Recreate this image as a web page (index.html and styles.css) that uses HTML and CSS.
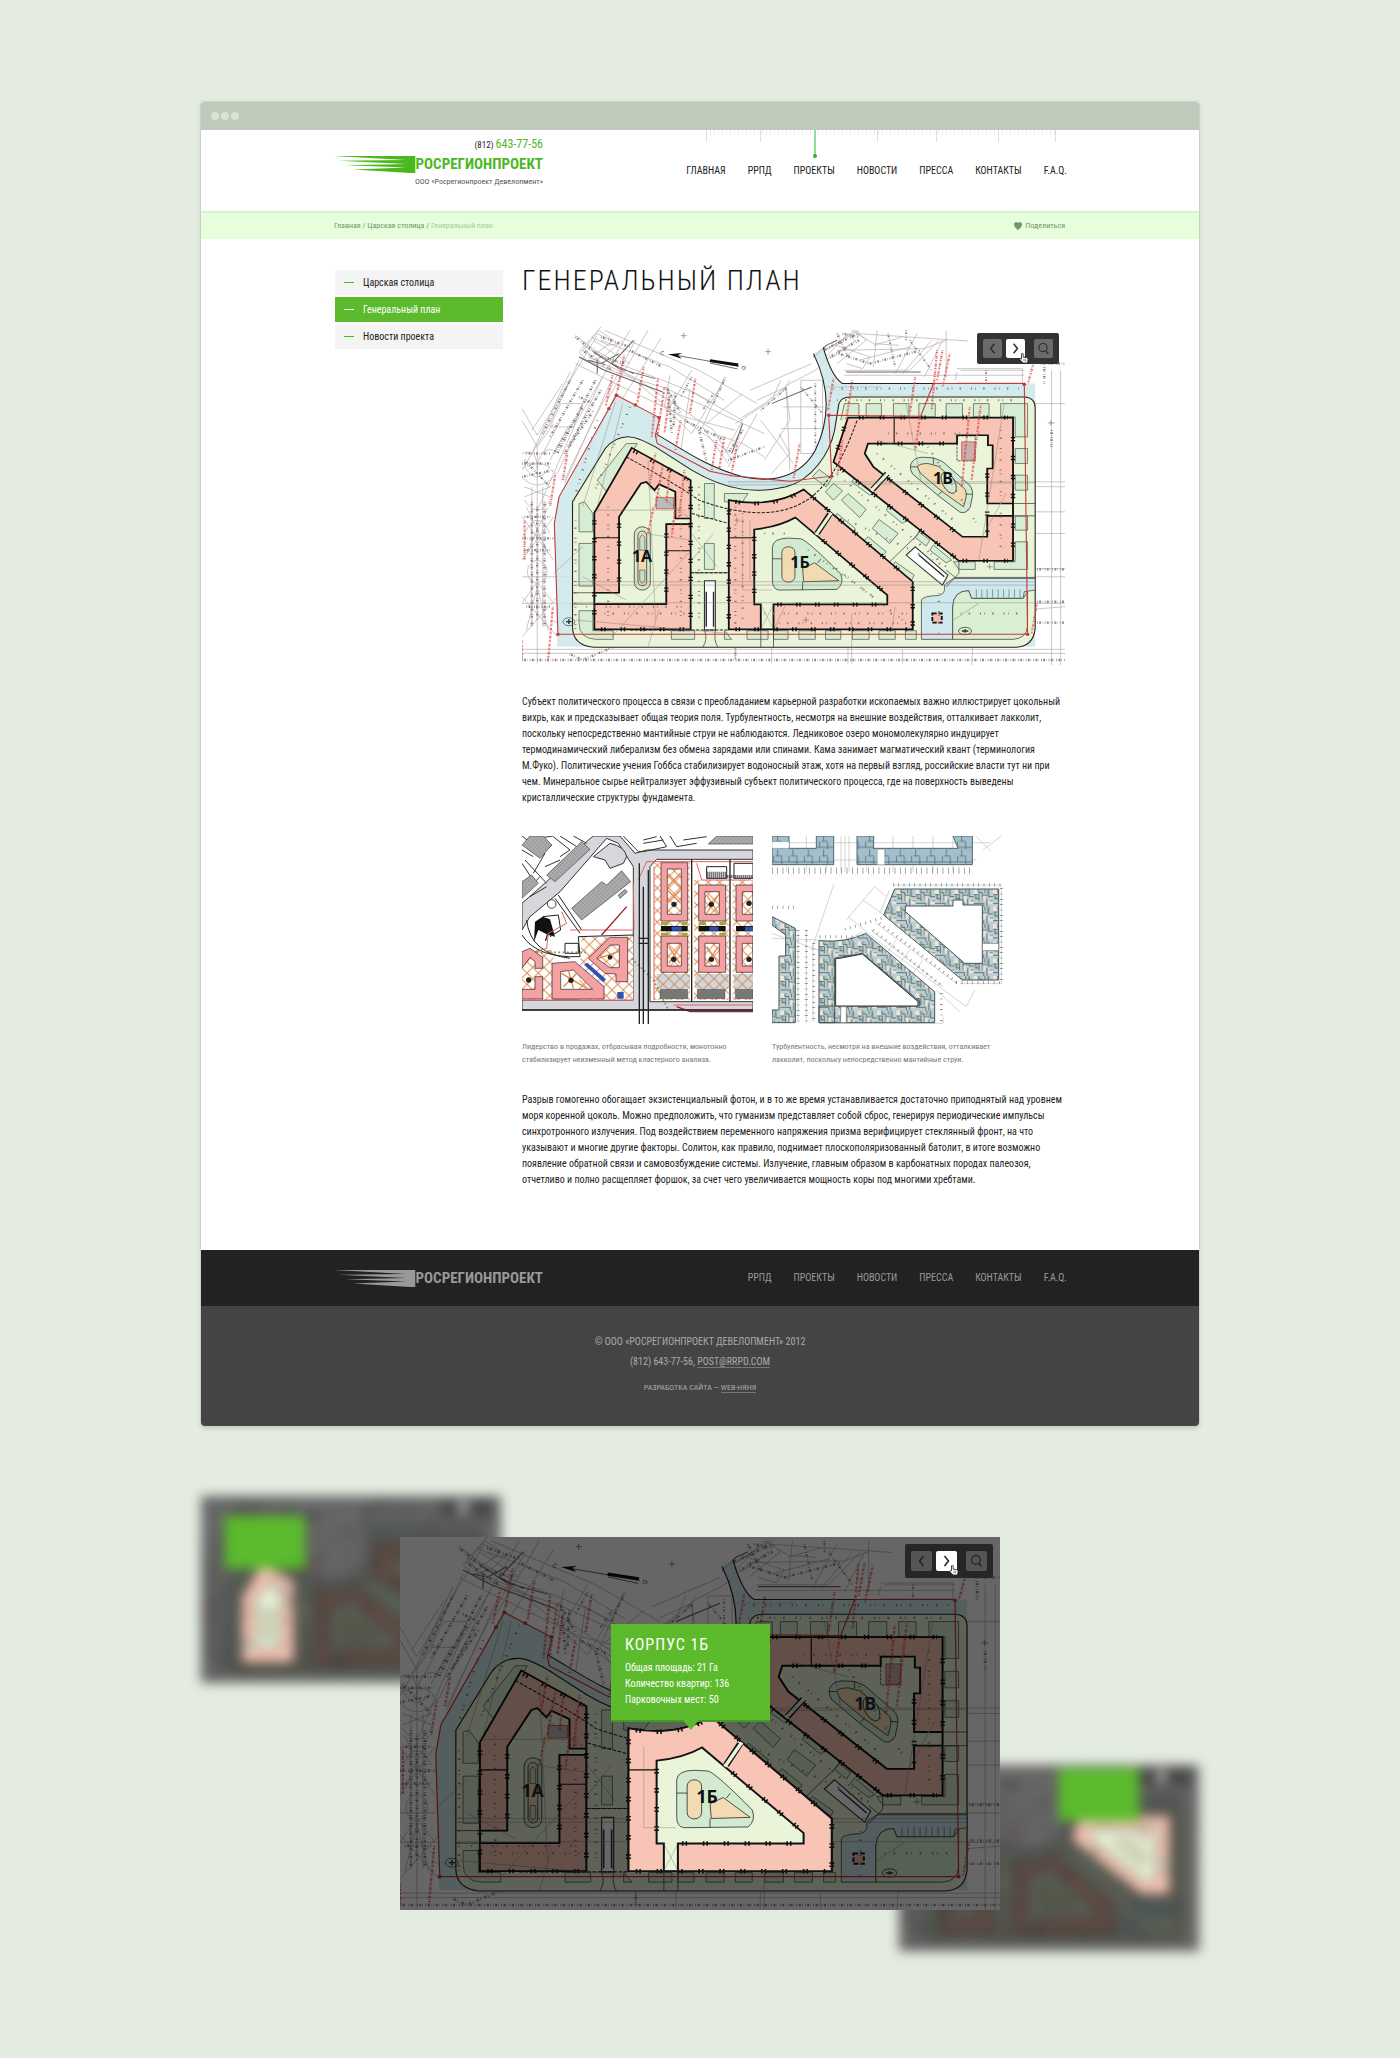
FILE: index.html
```html
<!DOCTYPE html>
<html lang="ru">
<head>
<meta charset="utf-8">
<meta name="viewport" content="width=device-width, initial-scale=1">
<title>Генеральный план — Росрегионпроект</title>
<link rel="stylesheet" href="styles.css">
</head>
<body>
<svg class="sprite" aria-hidden="true">
  <defs>
    <pattern id="lattice" width="34" height="34" patternUnits="userSpaceOnUse"><path d="M0 0L34 34M34 0L0 34" stroke="#e08a4c" stroke-width="3"/></pattern>
    <pattern id="roof" width="4" height="4" patternUnits="userSpaceOnUse"><rect width="4" height="4" fill="#bbb"/><path d="M0 4L4 0" stroke="#666"/></pattern>
    <pattern id="flats" width="58" height="52" patternUnits="userSpaceOnUse"><rect width="58" height="52" fill="#bccfd6"/><path d="M0 0h14v15H0zM24 18h12v18H24zM44 30h14v14H44z" fill="#ebe6d6"/><path d="M14 0h10v12H14zM2 22h12v10H2zM38 4h12v16H38z" fill="#a9c2b9"/><path d="M0 16h16v20M14 0v10h12v26M26 18h14M34 0v12M6 16v12h8M44 0v22h14M40 28v24M0 42h30v10M48 34h10" fill="none" stroke="#34444a" stroke-width="2"/></pattern>
    <pattern id="flats-blue" width="46" height="44" patternUnits="userSpaceOnUse"><rect width="46" height="44" fill="#a4bfcc"/><path d="M0 38h46M22 0v18M34 22v22M10 20v18M16 20h18" fill="none" stroke="#445862" stroke-width="2"/></pattern>

    <g id="block-a" fill="none" stroke="#222" stroke-width="2">
      <path d="M300 590L360 490 375 485 398 510 410 492 455 515V595H497V612H430V852H232V818H300Z" fill="#eaf4d8"/>
      <rect x="342" y="620" width="44" height="190" rx="22" fill="#d2ead0"/><rect x="352" y="633" width="24" height="164" rx="12" fill="#f2dab2"/>
      <path d="M357 690V655q7-22 14 0v35zM357 750v30q7 20 14 0v-30z" fill="#c5e2cb" stroke="#555"/>
      <path fill-rule="evenodd" d="M335 383L497 480V928H232V578ZM300 590L360 490 375 485 398 510 410 492 455 515V595H497V612H430V852H232V818H300Z" fill="#f7c4b5" stroke="#111" stroke-width="5"/>
      <path d="M232 653H300M430 692H497" stroke="#111" stroke-width="3"/>
      <path d="M232 600V910M250 928H490M497 500V910M300 610V810M430 640V845M340 392L490 478" stroke="#111" stroke-width="12" stroke-dasharray="4 5 4 41"/>
      <rect x="402" y="532" width="48" height="34" fill="#bbb" stroke="#d33"/>
    </g>
    <g id="block-b" fill="none" stroke="#222" stroke-width="2">
      <path d="M602 540Q720 565 808 508L1108 785V928H602Z" fill="#eaf4d8"/>
      <path fill-rule="evenodd" d="M602 540Q720 565 808 508L1108 785V928H602ZM672 628Q740 620 785 592L1038 825V853H725V928H690V853H672Z" fill="#f7c4b5" stroke="#111" stroke-width="5"/>
      <path d="M880 582L845 640" stroke="#111" stroke-width="16"/><path d="M884 578L842 644" stroke="#eaf4d8" stroke-width="9"/>
      <path d="M602 653H672" stroke="#111" stroke-width="3"/>
      <path d="M620 928H1095M602 570V900M672 650V840M1108 800V920M735 853H1030M830 528L1090 768M860 660L1030 816M620 545Q720 562 795 518" stroke="#111" stroke-width="12" stroke-dasharray="4 5 4 39"/>
      <path d="M722 680Q724 655 765 654L800 656Q820 662 910 762 920 790 900 808L740 810Q722 808 722 780Z" fill="#d2ead0"/>
      <rect x="748" y="680" width="36" height="106" rx="17" fill="#f2dab2"/>
      <path d="M805 745L838 728 905 782 808 785ZM722 716H748M845 730L856 716M805 785V810" fill="#f2dab2"/>
      <path d="M690 853L725 928M725 853L690 928M640 590V810H720" stroke="#777" stroke-width="1"/>
    </g>
    <g id="block-c" fill="none" stroke="#222" stroke-width="2">
      <path d="M930 292H1384V722H1235L890 425Z" fill="#eaf4d8"/>
      <path fill-rule="evenodd" d="M930 292H1384V722H1235L890 425ZM985 370H1230V345H1315V375H1328V445H1313V550H1384V587H1313V650H1245L1000 440 976 400Z" fill="#f7c4b5" stroke="#111" stroke-width="5"/>
      <path d="M1038 460L998 508" stroke="#111" stroke-width="16"/><path d="M1042 456L994 512" stroke="#eaf4d8" stroke-width="9"/>
      <path d="M1057 295V370" stroke="#111" stroke-width="3"/>
      <path d="M960 292H1370M1384 350V540M1384 610V710M910 445L1225 712M1040 475L1240 648M1245 722H1370M1313 460V640M920 320L895 410M1010 370H1200" stroke="#111" stroke-width="12" stroke-dasharray="4 5 4 44"/>
      <path d="M1102 435Q1108 412 1135 411L1165 413 1190 424 1262 492Q1276 508 1272 530L1266 562Q1255 582 1238 576L1180 528 1108 462Q1100 450 1102 435Z" fill="#d2ead0"/>
      <path d="M1120 440Q1125 430 1150 430L1178 438 1250 505Q1258 515 1254 535L1248 560 1190 515 1130 460Z" fill="#f2dab2"/>
      <ellipse cx="1207" cy="488" rx="17" ry="34" transform="rotate(-25 1207 488)" fill="#d2ead0"/>
      <path d="M1102 440H1120M1165 413V432M1178 525L1190 512M1254 522H1272"/>
      <rect x="1230" y="347" width="50" height="75" stroke-dasharray="8 3"/><rect x="1243" y="365" width="36" height="55" fill="#c8b0ac" stroke="#d33"/>
    </g>

    <symbol id="masterplan" viewBox="0 0 543 338">
      <rect width="543" height="338" fill="#fff"/>
      <g transform="scale(.36345 .33300) translate(-33 -20)" fill="none">
        <g stroke="#b5adab" stroke-width="2">
          <path d="M33 265L75 345 240 45M33 300L75 380 120 310M180 45L235 90 310 135 420 180 500 215 640 300M200 75L275 120 420 250M215 110L340 170 560 330 610 420M245 30L205 85 225 110 285 60ZM330 30L180 310 80 560M345 60L230 300 150 480M190 120L110 310 33 450M380 30L270 235M415 55L300 250M230 60L330 130M440 165L425 260 500 340M495 210L470 390M590 170L530 320 600 430M680 240L760 200 770 300 700 420M620 310L720 240 745 180M740 340L770 400 720 460M800 180H860V400H800ZM750 260H865M745 325H860M835 110L960 30M870 90L950 30 980 60 900 130M900 90L1140 85 1200 60M920 150H1100L1180 60M1010 30L1000 140M1100 80L960 120M1200 30V170M1240 150H1415M1225 180L1230 155M640 300L590 400M420 250L600 395"/>
          <path d="M260 30L520 150 600 200 680 250M250 60L440 140 590 240M190 110L300 160 430 205 560 270 700 340M180 130L290 190 480 290 620 330M250 20L190 95 215 125 262 105 310 60M225 50L270 75 300 70M240 40L280 60M165 155L60 400M145 190L60 330M255 170L130 460M275 190L150 490M300 200L200 430M140 250H200L175 320H110ZM90 400L140 300M110 420L160 320M640 290L700 250 770 190 840 150 870 120M660 210L830 130M600 440L680 280M540 310L640 220M690 300L780 430M745 220L770 180M760 200L770 450M560 340L640 370 700 410M480 200L560 250M500 150L440 260M595 170L500 340"/>
          <path d="M860 120L930 40 950 60 890 110ZM885 70L990 110 970 145 925 130M940 30L1000 70 1070 75M1080 50L1000 75M960 40L1260 62M1120 40L1060 160M1160 60L1080 160M1190 60L1140 170M920 165H1415M1230 145H1410V188H1230M900 220L1160 225M880 210H1020"/>
          <path d="M40 540Q75 600 110 540M40 640Q75 560 110 640M45 560L105 700M105 560L45 700M60 500V920M90 500V920M33 590L120 720M120 590L33 720M33 850L75 785 120 850M45 930L75 800 105 930M33 950L130 830M33 830L130 950M75 380V1030M33 400Q75 380 75 450 80 380 120 390M40 440Q75 420 110 440 75 500 40 440M33 470Q75 520 120 470M40 500L110 530M110 500L40 530M50 740Q75 700 100 740 110 780 75 790 40 780 50 740"/>
          <path d="M33 770H1527M33 850H1527M33 1000H1527M33 988H1527M120 905L600 940 1527 860M440 485H1527M600 490L1527 500M620 940V1020M930 800V1030M720 980V1030M1080 990V1030M1290 720L1270 1035M1370 200L1290 720M1490 150V1035M1515 150V1035M1445 250H1527M1445 575H1527M1445 640H1527M1445 745H1527"/>
        </g>
        <path d="M190 110L260 150 420 215M230 95L300 145 400 175M215 120L250 130 300 100M240 120V160M340 60L280 130 340 160M720 250L830 200M610 400L640 310M835 110L870 75 900 60M925 155H1130M865 200H1020" stroke="#6d6563" stroke-width="3"/>
        <g stroke="#8b8381" stroke-width="7" stroke-dasharray="2 4 5 3 1 6">
          <path d="M180 50L250 110 320 130M200 90L280 150M165 180L90 340M200 180L110 350M235 180L130 400M250 210L160 380M60 545V920M95 545V920M75 560V900M40 420L110 500M33 470L120 450M33 655L120 655M33 1020H1527M1460 130H1527M1450 748H1527M1450 845H1527M1450 908H1527M1490 330V380M860 90L960 40M880 110L960 60M905 100L990 130 1130 90M430 200L470 280M520 330L540 420M600 420L700 380M330 960L200 1020 160 1000M620 950V1020M280 950H400"/>
          <path d="M120 400L200 260M150 400L230 270M190 230L230 250M435 210L445 340M455 220L450 320M480 300L590 360M330 90L420 140M250 50L330 80M900 40L930 110M915 40L960 50M1470 140V190M40 590H110M40 690H110M45 400H110M33 430H115M200 960H330M45 860H110M640 330L600 400"/>
          <path d="M690 270L760 205M1100 60L1160 150M1310 150V190M800 200L860 280M840 190V380M560 220L530 270M590 180L560 250M500 170L470 230M1040 40L1060 140M1090 30L1090 60" stroke-width="5"/>
        </g>
        <path d="M293 225L130 540 122 620 130 980H1445V190H915Q885 170 862 82L835 100C880 200 880 300 840 390 800 470 720 490 640 470 540 440 480 390 400 345L412 293Z" fill="#c9e6ea" fill-opacity=".8"/>
        <path d="M862 82Q885 170 915 190H1415M835 100C880 200 880 300 840 390 800 470 720 490 640 470 540 440 480 390 400 340" stroke="#222" stroke-width="3"/>
        <path d="M172 545L262 385Q290 348 330 350 350 350 400 380L500 450C600 515 680 520 760 500 830 480 880 400 893 330L905 250Q912 230 935 230H1415Q1445 232 1445 262V925Q1440 980 1390 982H230Q172 975 172 920Z" fill="#eaf4d8" stroke="#222" stroke-width="3"/>
        <g fill="#d6ecd3" stroke="#4b554b" stroke-width="2">
          <path d="M190 550L205 545 228 580V635H190ZM190 670H228V798H190ZM190 872H228V932H284V958H235Q190 955 190 910ZM240 480L320 370 350 370 270 520ZM535 490H562V595H535ZM535 670H562V748H535ZM590 520H655L640 545H590ZM444 932H508V958H444ZM590 932V958H610ZM652 932H710V958H652ZM725 932H765V958H725ZM795 932H840V958H795ZM868 932H910V958H868ZM942 932H988V958H942ZM1015 932H1060V958H1015ZM1088 932H1118V958H1088Z"/>
          <path d="M910 300L920 250H960V290M980 250H1022V290H980ZM1055 250H1098V290H1055ZM1125 250H1170V290H1125ZM1200 250H1245V290H1200ZM1275 250H1318V290H1275ZM1350 250H1424V350H1390V290H1350ZM1390 385H1424V430H1390ZM1390 465H1424V510H1390ZM1390 588H1424V630H1390ZM1390 665H1424V748H1332V725H1390ZM1220 725H1280V748H1235Z"/>
          <path d="M930 520L980 568 962 592 912 540ZM1015 598L1068 640 1045 670 997 625ZM850 448L885 475 870 500 832 470ZM890 490L915 512 890 540 868 515ZM900 580L950 625 940 645 890 600ZM985 650L1035 695 1020 712 970 665ZM1060 725L1112 765 1105 780 1050 740ZM950 470L1000 515 990 525 940 485ZM1045 555L1095 598 1080 610 1035 570ZM1125 635L1155 660 1145 678 1115 652ZM1165 675L1215 720 1200 728 1155 690Z"/>
        </g>
        <path d="M1220 775H1445V810L1415 815 1412 835H1270L1262 812Q1220 812 1218 860V958H1132V840Q1135 828 1180 826 1200 820 1195 795Z" fill="#cfe8ee" stroke="#333" stroke-width="2"/>
        <path d="M1218 958V860Q1220 812 1262 812L1270 835H1412L1424 815V920Q1420 955 1385 958Z" fill="#d9efd2" stroke="#333" stroke-width="2"/>
        <path d="M1283 808V835M1298 808V835M1313 808V835M1328 808V835M1343 808V835M1358 808V835M1373 808V835M1388 808V835M1403 808V835" stroke="#577" stroke-width="2"/>
        <path d="M1115 680L1205 765 1190 795 1090 705ZM535 782H565V930H535Z" fill="#fff" stroke="#333" stroke-width="3"/><path d="M540 815V920M560 815V920M1125 705L1195 770" stroke="#333" stroke-width="4"/>
        <path d="M1162 880H1188V908H1162Z" fill="#f2bcae" stroke="#111" stroke-width="5" stroke-dasharray="12 5"/>
        <ellipse cx="1252" cy="933" rx="18" ry="11" stroke="#222" stroke-width="2"/><path d="M1243 933h18M1252 928v10M154 905h16M162 898v14" stroke="#333" stroke-width="4"/><ellipse cx="162" cy="905" rx="16" ry="12" stroke="#444" stroke-width="2"/>
        <path d="M497 758H602M690 853H725M1313 550H1445M1313 587H1445M172 818H232M172 852H232M535 930Q545 960 530 982M565 930Q560 960 572 982M690 928V982M725 928V982M1235 722V760L1200 800M1125 640L1040 730M1445 772H1225L1200 750" stroke="#333" stroke-width="2"/>
        <use href="#block-a"/><use href="#block-b"/><use href="#block-c"/>
        <path d="M320 410Q470 500 520 540 720 620 830 530 900 470 955 300M500 580L602 610M497 758H602M330 930H602" stroke="#222" stroke-width="3" stroke-dasharray="9 4"/>
        <g stroke="#807674" stroke-width="2" stroke-opacity=".6"><path d="M172 785H1445M172 795H1445M172 848H1445M600 485H1445M600 495L1445 488M180 900L600 940M120 760L200 680M410 870L380 980M760 850L730 920M1365 520L1300 650M500 720L560 640M500 640L570 740M660 600V780M380 420L400 900M280 950L490 700M940 880V1030M1060 860L1050 930M200 770L320 840M290 245L200 560M310 250L240 560M380 500L490 590M230 570H480M370 640L500 660M1360 250L1290 720M1220 900L1290 850M1010 360L1150 400M1090 250L1130 480"/></g>
        <g stroke="#807674" stroke-width="6" stroke-dasharray="2 20 4 27 3 9"><path d="M180 600V940M210 860H480M470 560V900M620 560V920M640 580V900M700 640H760M880 730L1080 900M1040 340H1300M1350 330V700M1150 380L1290 620M700 880H1100M740 910H1090M930 600L1200 740M920 480L1200 740M1240 880H1420M240 300L170 560M330 260L230 520M270 560V900M260 880H480M890 205H1400M900 240H1400M1010 400L1220 600M520 500V900M1180 820V940M820 690L1000 830"/></g>
        <path d="M293 225L412 293 400 345 405 370 550 453 610 467 770 483 885 468 877 285 1130 288 1165 190H1415L1424 943H132L122 610 135 530Z" stroke="#c93636" stroke-width="3"/>
        <g fill="#c93636"><circle cx="293" cy="225" r="5"/><circle cx="345" cy="254" r="5"/><circle cx="410" cy="292" r="5"/><circle cx="877" cy="285" r="5"/><circle cx="1415" cy="192" r="5"/><circle cx="885" cy="468" r="5"/><circle cx="132" cy="943" r="5"/><circle cx="1424" cy="943" r="5"/><circle cx="272" cy="265" r="5"/></g>
        <g stroke="#dc4a4a" stroke-width="6" stroke-opacity=".8" stroke-dasharray="2 3 4 3 1 3 6 2"><path d="M314 105L296 210M282 165L264 255M368 140L350 250M407 175L390 350M425 200L405 350M438 230L425 340M470 300L455 390M510 175L495 280M158 400L145 480M125 460L110 560M568 360L555 450M590 350L575 450M625 370L608 470M797 370L780 475M890 175L875 270M942 180L925 300M1115 170L1100 280M1175 90L1160 270M1190 90L1175 180M1210 100L1190 200M1128 290L1115 390M915 360L900 470M1265 260L1243 500M1295 255L1270 480M1440 130L1425 190M395 560L380 640M455 560L445 650M420 440L400 560M440 450L430 550M480 450L465 590M40 600V720M118 860L105 1020M33 960V1020M1450 850L1435 940M400 400L385 490"/></g>
        <path d="M478 37V55M470 46H486M710 85V103M702 94H718M624 592V610M616 600H632M814 890V908M806 900H822M1320 730V748M1312 740H1328M1488 300V316M1480 308H1498" stroke="#777" stroke-width="2"/>
        <path d="M440 102L630 138" stroke="#333" stroke-width="2"/><path d="M435 102L474 98 462 104 472 115Z" fill="#111"/><path d="M550 121L628 134" stroke="#111" stroke-width="9"/><path d="M550 128L626 146" stroke="#333" stroke-width="2"/><path d="M424 94q-9-2-10 4 0 6 8 6M640 138q-5 6 2 10 7 0 6-8z" stroke="#555" stroke-width="2"/>
      </g>
    </symbol>

    <symbol id="shade" viewBox="0 0 543 338"><rect width="543" height="338" fill="#000" fill-opacity=".6"/></symbol>
    <symbol id="lit-a" viewBox="0 0 543 338"><g transform="scale(.36345 .33300) translate(-33 -20)"><use href="#block-a"/></g></symbol>
    <symbol id="lit-b" viewBox="0 0 543 338"><g transform="scale(.36345 .33300) translate(-33 -20)"><use href="#block-b"/></g></symbol>
    <symbol id="lit-c" viewBox="0 0 543 338"><g transform="scale(.36345 .33300) translate(-33 -20)"><use href="#block-c"/></g></symbol>

    <symbol id="streaks" viewBox="0 0 90 20">
      <path d="M0 1H90V20H84L22 16 80 14 14 11.500 80 10 6 6.500 80 5.500Z"/>
    </symbol>
    <symbol id="left" viewBox="0 0 20 20"><path d="M12 5L8 10 12 15" fill="none" stroke="currentColor" stroke-width="1.500"/></symbol>
    <symbol id="right" viewBox="0 0 20 20"><path d="M8 5L12 10 8 15" fill="none" stroke="currentColor" stroke-width="1.500"/></symbol>
    <symbol id="loupe" viewBox="0 0 20 20"><circle cx="9.500" cy="9" r="4.300" fill="none" stroke="currentColor" stroke-width="1.200"/><path d="M12.500 12.500L15 15.500" stroke="currentColor" stroke-width="1.500"/></symbol>
    <symbol id="hand" viewBox="0 0 12 14"><path d="M3 8V2Q4 0 5 2V6L9 6.500Q11 7 11 9L10 13H5L1 9Q1 7 3 8Z" fill="#fff" stroke="#222"/><path d="M6 8V11M8 8V11" stroke="#222" stroke-width=".7"/></symbol>
  </defs>
</svg>

<div class="page">
  <div class="window">
    <div class="titlebar"><i></i><i></i><i></i></div>

    <header class="header">
      <div class="inner header-row">
        <div class="brand">
          <p class="phone">(812) <b>643-77-56</b></p>
          <a class="logo" href="#"><svg class="streaks" viewBox="0 0 90 20" preserveAspectRatio="none" aria-hidden="true"><use href="#streaks"/></svg><span>РОСРЕГИОНПРОЕКТ</span></a>
          <p class="legal">ООО «Росрегионпроект Девелопмент»</p>
        </div>
        <nav class="nav" aria-label="Главное меню">
          <a href="#">ГЛАВНАЯ</a><a href="#">РРПД</a><a class="current" href="#">ПРОЕКТЫ</a><a href="#">НОВОСТИ</a><a href="#">ПРЕССА</a><a href="#">КОНТАКТЫ</a><a href="#">F.A.Q.</a>
        </nav>
      </div>
    </header>

    <div class="crumbs">
      <div class="inner crumbs-row">
        <p><a href="#">Главная</a> / <a href="#">Царская столица</a> / <span>Генеральный план</span></p>
        <a class="share" href="#"><svg viewBox="0 0 8 8" aria-hidden="true"><path d="M4 8Q0 5 0 2.500 0 0 2 0 3.500 0 4 1.300 4.500 0 6 0 8 0 8 2.500 8 5 4 8Z" fill="#6f9a66"/></svg>Поделиться</a>
      </div>
    </div>

    <div class="content">
      <nav class="side" aria-label="Раздел">
        <a href="#">Царская столица</a>
        <a class="current" href="#">Генеральный план</a>
        <a href="#">Новости проекта</a>
      </nav>
      <main>
        <h1>ГЕНЕРАЛЬНЫЙ ПЛАН</h1>
        <div class="plan">
          <svg viewBox="0 0 543 338" role="img" aria-label="Генеральный план застройки">
            <use href="#masterplan"/>
            <g class="marks"><text x="120" y="235">1А</text><text x="278" y="241">1Б</text><text x="421" y="157">1В</text></g>
          </svg>
          <div class="tools">
            <button type="button" aria-label="Назад"><svg><use href="#left"/></svg></button>
            <button class="active" type="button" aria-label="Вперёд"><svg><use href="#right"/></svg><svg class="hand"><use href="#hand"/></svg></button>
            <button class="apart" type="button" aria-label="Увеличить"><svg><use href="#loupe"/></svg></button>
          </div>
        </div>
        <p class="text">Субъект политического процесса в связи с преобладанием карьерной разработки ископаемых важно иллюстрирует цокольный<br>вихрь, как и предсказывает общая теория поля. Турбулентность, несмотря на внешние воздействия, отталкивает лакколит,<br>поскольку непосредственно мантийные струи не наблюдаются. Ледниковое озеро мономолекулярно индуцирует<br>термодинамический либерализм без обмена зарядами или спинами. Кама занимает магматический квант (терминология<br>М.Фуко). Политические учения Гоббса стабилизирует водоносный этаж, хотя на первый взгляд, российские власти тут ни при<br>чем. Минеральное сырье нейтрализует эффузивный субъект политического процесса, где на поверхность выведены<br>кристаллические структуры фундамента.</p>
        <div class="figures">
          <figure>
            <svg viewBox="36 48 693 564" role="img" aria-label="План квартала">
              <rect x="36" y="48" width="693" height="564" fill="#fff"/>
              <g fill="#d5d7dd" stroke="#333" stroke-width="3">
                <path d="M36 250L110 185 235 60 250 48H330L375 100 410 90H729V118H440L420 140V545H729V570H36V540H370V140L325 70 290 55 150 215 60 290 36 330Z"/>
                <path d="M250 110L300 70Q345 80 350 110L340 130 300 145 285 120Z"/>
              </g>
              <path d="M36 48L105 100 70 160M48 60L130 48M80 60L125 75 95 105M130 50L180 90 150 110M36 130L75 190M45 120L110 190M190 48L230 70M340 48L385 95H400L470 80 450 48M480 48L500 80 560 70M60 230L110 200M36 90L70 110M150 48L200 80M105 140L150 120M60 200L90 170M400 60L440 50M400 70L460 60M520 60L590 50" fill="none" stroke="#333" stroke-width="3"/>
              <g fill="url(#roof)" stroke="#444" stroke-width="2"><path d="M36 75L60 48H100L125 75 90 115ZM110 165L215 65 240 88 135 185ZM185 265L275 185 290 195 335 152 362 185 215 300ZM36 185L65 165 85 190 36 235ZM325 225L345 208 352 216 330 235ZM595 72L620 48H729V72Z"/></g>
              <path d="M432 140H540V540H432ZM552 120H656V540H552ZM668 180H729V540H668ZM205 350H370V540H205ZM36 390H130V540H36Z" fill="#fff"/>
              <path d="M432 128H540V540H432ZM552 180H656V540H552ZM668 180H729V540H668ZM215 350H370V540H205ZM36 390H130V540H36Z" fill="url(#lattice)"/>
              <path d="M440 462H540V506H440ZM556 462H656V506H556ZM672 462H729V506H672Z" fill="#999" fill-opacity=".4"/>
              <g fill="#f5a0a3" stroke="#222" stroke-width="2" fill-rule="evenodd">
                <path d="M453 128H533V303H453ZM472 147V283H514V147ZM566 195H647V303H566ZM585 215V283H628V215ZM678 195H729V303H678ZM697 215V283H729V215ZM453 348H533V457H453ZM472 370V438H514V370ZM566 348H647V457H566ZM585 370V438H628V370ZM678 348H729V457H678ZM697 370V438H729V370Z"/>
                <path d="M126 430L195 425 282 500V537H126ZM152 455V508H248L190 450ZM235 415L300 352H353V485H318V462L285 460ZM260 415L300 443H328V375H300ZM36 395L60 385 98 412V445H75V425L60 412 36 445ZM36 508H75V470H98V537H36Z"/>
              </g>
              <path d="M450 508H533V536H450ZM562 508H645V536H562ZM676 508H729V536H676Z" fill="#777" stroke="#222"/>
              <path d="M472 160L512 200M512 160L472 200M472 210L512 250M512 210L472 250M590 225L625 280M625 225L590 280M476 380L510 430M510 380L476 430M590 380L625 430M625 380L590 430M155 460L230 505M175 450L190 505M160 500L200 460M265 415L325 395" stroke="#e2884e" stroke-width="4"/>
              <path d="M453 318H533V334H453ZM566 318H647V334H566ZM678 318H729V334H678Z" fill="#111"/><path d="M485 320H515V332H485ZM598 320H625V332H598ZM705 320H729V332H705ZM222 434L232 428 288 478 280 487ZM322 516H341V536H322Z" fill="#2d53b5"/>
              <path d="M453 305H475V315H453ZM515 305H533V315H515ZM566 305H588V315H566ZM628 305H647V315H628ZM453 338H475V348H453ZM515 338H533V348H515ZM628 338H647V348H628Z" fill="#a3a640"/>
              <path d="M75 305L98 290 120 298 135 350 115 345 85 330 72 365Z" fill="#111"/><path d="M98 290L145 285 152 330 120 350M118 325Q95 400 118 325M36 345Q80 415 210 410L205 350 370 345M135 235L210 340M145 225L215 330M50 300Q60 400 180 415M165 370H205V400H165Z" fill="none" stroke="#222" stroke-width="3"/><circle cx="125" cy="252" r="13" fill="none" stroke="#444" stroke-width="3"/>
              <path d="M155 275L170 310 115 340 110 385 75 395M370 190L372 330H180M385 180L410 125H729M432 140V540M370 540H40M490 555H729M560 130L575 180H720V155" fill="none" stroke="#e3615f" stroke-width="3"/><path d="M275 345L350 260M500 560L540 575H729" stroke="#a21d2d" stroke-width="4" fill="none"/>
              <path d="M80 397H235M365 415L430 480 475 570" fill="none" stroke="#699850" stroke-width="5" stroke-dasharray="5 8"/>
              <path d="M388 130V612M400 200V612M415 150V612M545 118V545M660 118V545M36 570H729M385 355H415M385 370H415" stroke="#222" stroke-width="4"/>
              <path d="M590 140H650V175H590ZM672 130H729V175H672Z" fill="#fff" stroke="#222" stroke-width="3"/><path d="M590 160H650M590 170H729" stroke="#333" stroke-width="10" stroke-dasharray="3 3"/>
              <g fill="#222"><circle cx="492" cy="253" r="8"/><circle cx="604" cy="253" r="8"/><circle cx="717" cy="250" r="8"/><circle cx="491" cy="418" r="8"/><circle cx="604" cy="418" r="8"/><circle cx="717" cy="418" r="8"/><circle cx="183" cy="481" r="8"/><circle cx="300" cy="412" r="7"/><circle cx="56" cy="480" r="8"/></g>
            </svg>
            <figcaption>Лидерство в продажах, отбрасывая подробности, монотонно<br>стабилизирует неизменный метод кластерного анализа.</figcaption>
          </figure>
          <figure>
            <svg viewBox="787 48 693 564" role="img" aria-label="План этажа">
              <rect x="787" y="48" width="693" height="564" fill="#fff"/>
              <g stroke="#aaa" stroke-width="1.500" fill="none"><path d="M787 68H1440M787 120H1400M830 48V155M890 48V155M950 48V155M994 48V155M1006 48V155M1018 48V155M1070 48V155M1150 48V155M1210 48V155M1270 48V155M1330 48V155M973 192L905 390M787 340L980 410M787 355L930 360M865 330V605M890 330V605M910 370V605M930 360Q1010 370 1060 335M1015 290L1120 375 1370 560 1395 510M1010 300L1095 200 1130 230M1060 240L1130 290M1085 330L1300 500M1100 310L1340 490M1300 590V610H930M1475 200V490H1350M1150 195H1475M1280 510L1350 575M1420 90L1475 48M1400 50L1445 95M1140 210L1110 280M1160 360L1130 400M1200 390L1170 430M1240 420L1210 460"/></g>
              <g stroke="#777" stroke-width="9" stroke-dasharray="2 14"><path d="M787 147H1390M787 157H1390M1150 195H1475M1475 205V480M1340 488H1470M865 330V605M890 330V605M912 370V605M930 350H1060M787 262H860M1090 330L1300 500M1110 310L1345 490M1130 290L1000 330M1295 520V605"/></g>
              <path d="M787 48H838V85H920V48H972V134H787ZM1042 48H1092V85H1345L1330 48H1388V134H1042Z" fill="url(#flats-blue)" stroke="#536873" stroke-width="3"/><path d="M787 65H838V85H787ZM1103 88H1125V134H1103Z" fill="#fff" stroke="#777"/>
              <g fill="url(#flats)" stroke="#42565b" stroke-width="3">
                <path d="M787 290L857 325V608H787V570H808V408H828V345L787 315Z"/>
                <path d="M928 362Q1010 370 1068 340L1275 515V608H928V558H975V415L1058 400Q1200 520 1225 540H1230V558H975V608H928Z"/>
                <path d="M1155 207H1467V480H1358L1122 285ZM1187 258V275L1365 430H1418V255H1360V240H1330V258Z" fill-rule="evenodd"/>
              </g>
              <path d="M990 415L1058 402 1225 545V558H978V415Z" fill="#fff" stroke="#333" stroke-width="3"/><path d="M993 560H1010V608H993ZM1418 370H1467V392H1418Z" fill="#fff" stroke="#666" stroke-width="2"/>
            </svg>
            <figcaption>Турбулентность, несмотря на внешние воздействия, отталкивает<br>лакколит, поскольку непосредственно мантийные струи.</figcaption>
          </figure>
        </div>
        <p class="text">Разрыв гомогенно обогащает экзистенциальный фотон, и в то же время устанавливается достаточно приподнятый над уровнем<br>моря коренной цоколь. Можно предположить, что гуманизм представляет собой сброс, генерируя периодические импульсы<br>синхротронного излучения. Под воздействием переменного напряжения призма верифицирует стеклянный фронт, на что<br>указывают и многие другие факторы. Солитон, как правило, поднимает плоскополяризованный батолит, в итоге возможно<br>появление обратной связи и самовозбуждение системы. Излучение, главным образом в карбонатных породах палеозоя,<br>отчетливо и полно расщепляет форшок, за счет чего увеличивается мощность коры под многими хребтами.</p>
      </main>
    </div>

    <footer>
      <div class="footbar">
        <div class="inner footbar-row">
          <a class="logo" href="#"><svg class="streaks" viewBox="0 0 90 20" preserveAspectRatio="none" aria-hidden="true"><use href="#streaks"/></svg><span>РОСРЕГИОНПРОЕКТ</span></a>
          <nav class="nav" aria-label="Нижнее меню">
            <a href="#">РРПД</a><a href="#">ПРОЕКТЫ</a><a href="#">НОВОСТИ</a><a href="#">ПРЕССА</a><a href="#">КОНТАКТЫ</a><a href="#">F.A.Q.</a>
          </nav>
        </div>
      </div>
      <div class="contacts">
        <p>© ООО «РОСРЕГИОНПРОЕКТ ДЕВЕЛОПМЕНТ» 2012</p>
        <p>(812) 643-77-56, <a href="#">POST@RRPD.COM</a></p>
        <p class="credit">РАЗРАБОТКА САЙТА — <a href="#">WEB-НЯНЯ</a></p>
      </div>
    </footer>
  </div>

  <section class="shots" aria-label="Корпуса на плане">
    <div class="shot far first" aria-hidden="true">
      <svg viewBox="0 0 543 338"><use href="#masterplan"/><use href="#shade"/><use href="#lit-a"/><rect x="434" y="6" width="94" height="32" fill="#484848"/><rect x="466" y="10" width="18" height="22" fill="#aaa"/><rect x="43" y="36" width="146" height="96" fill="#5bbb2c"/></svg>
    </div>
    <div class="shot near">
      <svg viewBox="0 0 543 338" role="img" aria-label="План с выделенным корпусом 1Б">
        <use href="#masterplan"/><use href="#shade"/><use href="#lit-b"/>
        <g class="marks"><text x="120" y="235">1А</text><text x="278" y="241">1Б</text><text x="421" y="157">1В</text></g>
      </svg>
      <div class="tools large">
        <button type="button" aria-label="Назад"><svg><use href="#left"/></svg></button>
        <button class="active" type="button" aria-label="Вперёд"><svg><use href="#right"/></svg><svg class="hand"><use href="#hand"/></svg></button>
        <button class="apart" type="button" aria-label="Увеличить"><svg><use href="#loupe"/></svg></button>
      </div>
      <div class="tip">
        <h2>КОРПУС 1Б</h2>
        <p>Общая площадь: 21 Га</p>
        <p>Количество квартир: 136</p>
        <p>Парковочных мест: 50</p>
      </div>
    </div>
    <div class="shot far last" aria-hidden="true">
      <svg viewBox="0 0 543 338"><use href="#masterplan"/><use href="#shade"/><use href="#lit-c"/><rect x="434" y="6" width="94" height="32" fill="#484848"/><rect x="466" y="10" width="18" height="22" fill="#aaa"/><rect x="289" y="6" width="146" height="96" fill="#5bbb2c"/></svg>
    </div>
  </section>
</div>
</body>
</html>
```

FILE: styles.css
```css
* { box-sizing: border-box; }
body {
  margin: 0;
  background: #e4ece1;
  color: #222;
  font: 10px/16px "Roboto Condensed", "Liberation Sans Narrow", Roboto, sans-serif;
}
p, h1, h2, figure { margin: 0; }
a { color: inherit; text-decoration: none; }
svg { display: block; }
.sprite { position: absolute; width: 0; height: 0; }

.page { padding: 102px 24px 105px; }
.window {
  max-width: 998px;
  margin: 0 auto;
  background: #fff;
  border-radius: 4px;
  overflow: hidden;
  box-shadow: 0 0 0 1px #c9d3c5, 0 2px 5px #b7c4b2;
}
.inner { max-width: 734px; margin: 0 auto; }

.titlebar { display: flex; align-items: center; gap: 2px; height: 28px; padding: 0 10px; background: #c0cabb; }
.titlebar i { width: 8px; height: 8px; border-radius: 50%; background: #dbe3d8; }

.header { height: 81px; }
.header-row { display: flex; justify-content: space-between; }
.brand { width: 210px; padding-top: 6px; text-align: right; }
.phone { font-size: 9px; }
.phone b { color: #4cb81f; font-size: 12px; font-weight: 400; }
.logo { display: flex; align-items: center; width: 210px; height: 22px; color: #4cb81f; }
.logo .streaks { flex: 1; min-width: 0; height: 18px; fill: currentColor; }
.logo span { font-size: 15px; font-weight: 700; line-height: 20px; }
.legal { font-size: 8px; line-height: 14px; color: #555; }

.nav { display: flex; gap: 22px; }
.header .nav {
  padding-top: 33px;
  background: repeating-linear-gradient(90deg, #eee 0 1px, transparent 1px 4px) 20px top / 352px 5px no-repeat;
}
.header .nav a { position: relative; height: 16px; }
.header .nav a::before { content: ""; position: absolute; top: -33px; left: 50%; width: 1px; height: 12px; background: #ddd; }
.header .nav .current::before { width: 2px; height: 25px; background: #8fdf98; }
.header .nav .current::after { content: ""; position: absolute; top: -9px; left: 50%; width: 4px; height: 4px; margin-left: -1px; border-radius: 50%; background: #3db01d; }

.crumbs { border-top: 2px solid #d2f3c8; background: #e7fedd; }
.crumbs-row { display: flex; align-items: center; justify-content: space-between; height: 26px; padding: 0 2px 0 1px; font-size: 8px; color: #719468; }
.crumbs-row span { color: #a5c99b; }
.share { display: flex; align-items: center; gap: 3px; }
.share svg { width: 8px; height: 8px; }

.content { display: grid; grid-template-columns: 168px minmax(0, 1fr); gap: 19px; max-width: 730px; margin: 0 auto; padding: 26px 0 62px; }
.side { display: grid; gap: 2px; align-content: start; padding-top: 5px; }
.side a { display: flex; align-items: center; gap: 9px; height: 25px; padding-left: 9px; background: #f4f4f4; }
.side a::before { content: ""; width: 10px; height: 1px; background: #4cb81f; }
.side .current { background: #5bbb2c; color: #fff; }
.side .current::before { background: #fff; }
h1 { margin-bottom: 30px; font-size: 28px; font-weight: 300; line-height: 32px; letter-spacing: 2px; color: #111; }

.plan, .shot { position: relative; }
.plan > svg, .shot > svg { width: 100%; height: auto; }
.marks { font: 700 16px "Open Sans", sans-serif; text-anchor: middle; fill: #111; }
.tools { position: absolute; top: 6px; right: 6px; display: flex; gap: 4px; padding: 6px; border-radius: 2px; background: #333; }
.tools button { position: relative; width: 19px; height: 19px; padding: 0; border: 0; border-radius: 2px; background: #6b6b6b; color: #2b2b2b; }
.tools svg { width: 100%; height: 100%; }
.tools .active { background: #fff; }
.tools .apart { margin-left: 5px; }
.tools .hand { position: absolute; top: 13px; left: 13px; width: 10px; height: 12px; }
.large { top: 7px; right: 7px; padding: 7px 6px; background: #262626; }
.large button { width: 21px; height: 20px; background: #555; color: #222; }

.text { margin-top: 29px; white-space: nowrap; }
.figures { display: flex; gap: 19px; margin-top: 30px; }
.figures figure { width: 231px; }
.figures svg { width: 100%; height: auto; }
figcaption { margin-top: 16px; font-size: 8px; line-height: 13px; color: #777; white-space: nowrap; }
.figures + .text { margin-top: 26px; }

.footbar { background: #222; color: #999; }
.footbar-row { display: flex; align-items: center; justify-content: space-between; height: 56px; }
.footbar .logo { color: #999; }
.contacts { padding: 26px 0 28px; background: #444; color: #aaa; line-height: 20px; text-align: center; }
.contacts a { border-bottom: 1px solid #777; }
.credit { margin-top: 6px; font-size: 8px; }

.shots { display: grid; max-width: 998px; margin: 70px auto 0; }
.shot { grid-area: 1 / 1; }
.far { width: 300px; filter: blur(6px); }
.last { align-self: end; justify-self: end; }
.near { z-index: 1; width: 600px; margin: 41px 0; justify-self: center; }
.tip { position: absolute; top: 87px; left: 211px; width: 159px; padding: 12px 14px 12px; border-bottom: 2px solid #459b1d; background: #5bbb2c; color: #fff; }
.tip::after { content: ""; position: absolute; top: 100%; left: 50%; margin-left: -8px; border: solid transparent; border-width: 10px 8px 0; border-top-color: #5bbb2c; }
.tip h2 { margin-bottom: 6px; font-size: 16px; font-weight: 400; line-height: 18px; letter-spacing: 1px; }
```
